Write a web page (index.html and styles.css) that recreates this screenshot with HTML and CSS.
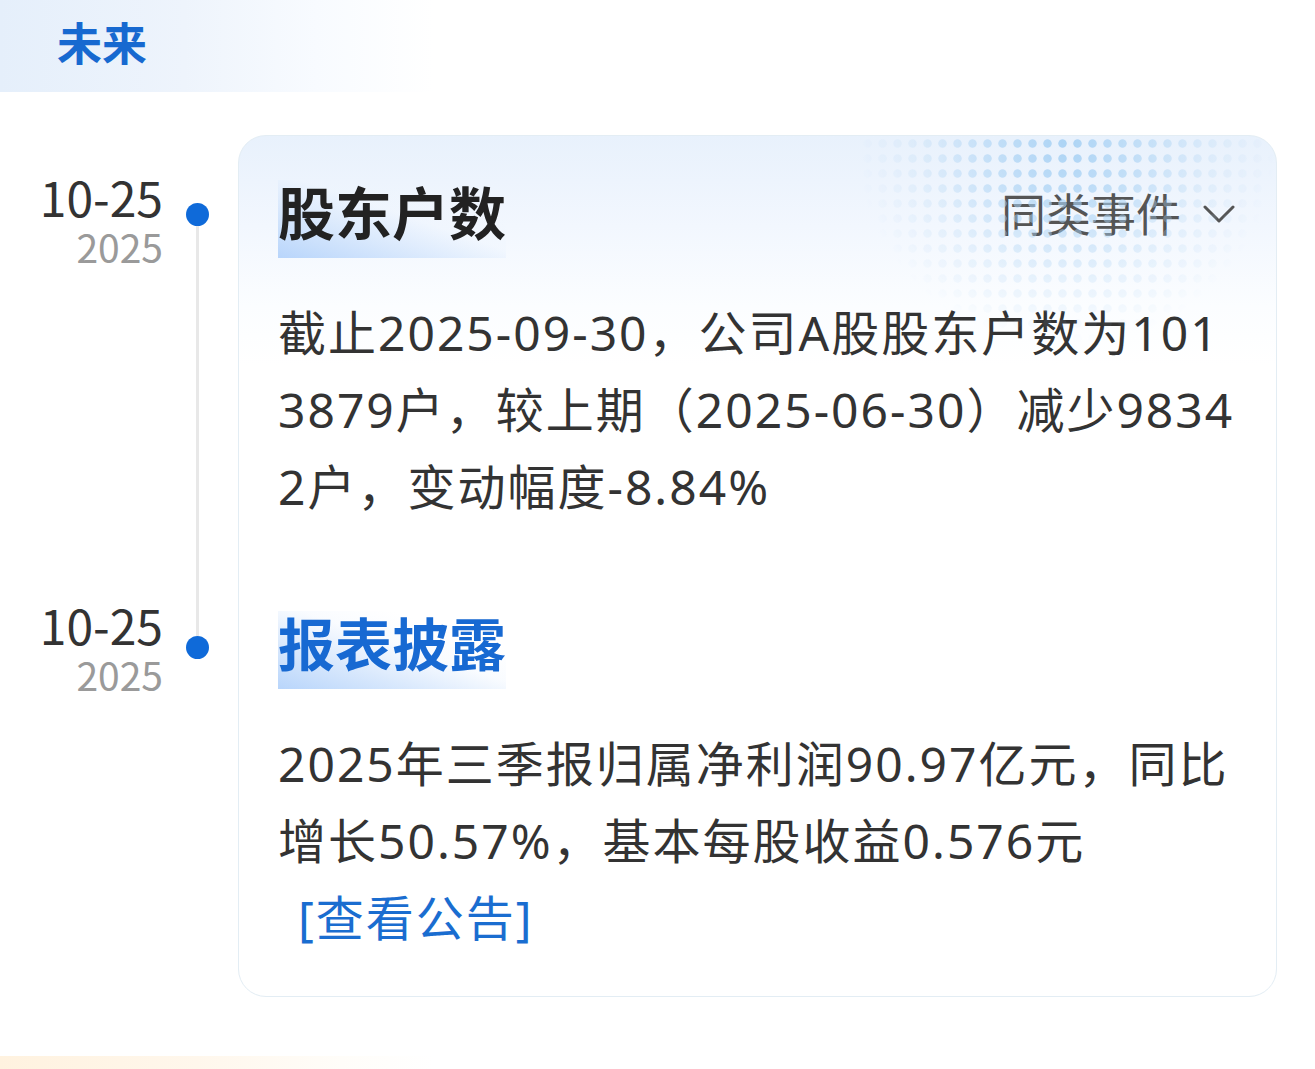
FILE: index.html
```html
<!DOCTYPE html>
<html lang="zh-CN">
<head>
<meta charset="utf-8">
<title>未来</title>
<link rel="stylesheet" href="styles.css">
</head>
<body>
<div class="section-head future"><span class="section-title">未来</span></div>

<div class="timeline">
  <div class="card-bg"><div class="card-dots"></div></div>

  <div class="date date-first"><div class="md">10-25</div><div class="yr">2025</div></div>
  <div class="axis axis-first"><span class="dot"></span><span class="rail"></span></div>
  <div class="event event-first">
    <div class="event-head">
      <h2 class="event-title">股东户数</h2>
      <div class="similar">同类事件<svg class="chev" width="32" height="18" viewBox="0 0 32 18"><path d="M2 2 L16 16 L30 2" fill="none" stroke="#555" stroke-width="3" stroke-linecap="round" stroke-linejoin="round"/></svg></div>
    </div>
    <p class="event-text">截止2025-09-30，公司A股股东户数为1013879户，较上期（2025-06-30）减少98342户，变动幅度-8.84%</p>
  </div>

  <div class="date date-second"><div class="md">10-25</div><div class="yr">2025</div></div>
  <div class="axis axis-second"><span class="rail"></span><span class="dot"></span></div>
  <div class="event event-second">
    <h2 class="event-title blue">报表披露</h2>
    <p class="event-text">2025年三季报归属净利润90.97亿元，同比增长50.57%，基本每股收益0.576元<a class="notice-link" href="#">[查看公告]</a></p>
  </div>
</div>

<div class="section-head past"></div>
</body>
</html>
```
FILE: styles.css
```css
html, body {
  margin: 0;
  padding: 0;
  background: #fff;
}
body {
  font-family: "Noto Sans", "Noto Sans CJK SC", sans-serif;
  color: #333;
  width: 1315px;
}

.section-head {
  height: 92px;
  display: flex;
  align-items: center;
  padding-left: 57px;
  box-sizing: border-box;
}
.future {
  background: linear-gradient(90deg, #e5effb 0%, #eef4fc 14%, #f8fbff 24%, #ffffff 33%);
}
.past {
  margin-top: 59px;
  background: linear-gradient(90deg, #fff2df 0%, #fff7ec 15%, #fffdf9 26%, #ffffff 33%);
}
.section-title {
  font-family: "Noto Sans CJK SC", sans-serif;
  font-size: 45px;
  font-weight: 700;
  color: #1769d0;
  line-height: 60px;
  margin-top: -8px;
}

.timeline {
  margin-top: 43px;
  display: grid;
  grid-template-columns: 163px 75px 1039px;
  grid-template-rows: auto auto;
}

.card-bg {
  grid-column: 3;
  grid-row: 1 / 3;
  border: 1px solid #e3edf4;
  border-radius: 28px;
  background: linear-gradient(180deg, #e8f1fc 0px, #f2f7fe 90px, #fbfdff 170px, #ffffff 230px);
  overflow: hidden;
  display: flex;
  justify-content: flex-end;
  align-items: flex-start;
}
.card-dots {
  width: 420px;
  height: 215px;
  background-image: radial-gradient(circle, #a9d2f4 0 3.8px, rgba(169,210,244,0) 4.6px);
  background-size: 15px 15px;
  background-position: 4px 0px;
  -webkit-mask-image: radial-gradient(ellipse 50% 95% at 50% 3%, rgba(0,0,0,0.95) 0%, rgba(0,0,0,0.6) 35%, rgba(0,0,0,0.22) 68%, rgba(0,0,0,0) 100%);
  mask-image: radial-gradient(ellipse 50% 95% at 50% 3%, rgba(0,0,0,0.95) 0%, rgba(0,0,0,0.6) 35%, rgba(0,0,0,0.22) 68%, rgba(0,0,0,0) 100%);
}

.date {
  grid-column: 1;
  text-align: right;
  font-family: "Noto Sans CJK SC", sans-serif;
}
.date-first { grid-row: 1; padding-top: 33px; }
.date-second { grid-row: 2; padding-top: 71px; }
.md {
  font-size: 48px;
  line-height: 56px;
  color: #333;
}
.yr {
  font-size: 39px;
  line-height: 44px;
  color: #9a9a9a;
}

.axis {
  grid-column: 2;
  display: flex;
  flex-direction: column;
  padding-left: 23px;
}
.axis-first { grid-row: 1; padding-top: 68px; }
.axis-second { grid-row: 2; }
.dot {
  width: 23px;
  height: 23px;
  border-radius: 50%;
  background: #0f6ad9;
  flex: none;
}
.rail {
  width: 3px;
  margin-left: 10px;
  background: #e8e8e8;
}
.axis-first .rail { flex: 1; }
.axis-second .rail { height: 111px; flex: none; }

.event {
  grid-column: 3;
  padding: 0 40px 0 40px;
}
.event-first { grid-row: 1; padding-top: 45px; }
.event-second { grid-row: 2; padding-top: 86px; padding-bottom: 40px; }

.event-head {
  display: flex;
  justify-content: space-between;
  align-items: flex-start;
}
.event-title {
  display: inline-block;
  margin: 0;
  font-family: "Noto Sans CJK SC", sans-serif;
  font-size: 57px;
  line-height: 60px;
  font-weight: 700;
  color: #222;
  padding-bottom: 18px;
  background: linear-gradient(to top right, #b8d5fb 0%, rgba(206,226,252,0.75) 30%, rgba(236,244,254,0.3) 55%, rgba(255,255,255,0) 75%);
}
.event-title.blue {
  color: #1769d2;
}
.similar {
  display: flex;
  align-items: center;
  gap: 22px;
  font-family: "Noto Sans CJK SC", sans-serif;
  font-size: 45px;
  line-height: 64px;
  color: #555;
  margin-top: 1px;
  margin-right: 2px;
}
.chev { display: block; margin-top: 2px; }

.event-text {
  margin: 37px 0 0;
  font-size: 48px;
  line-height: 76.8px;
  letter-spacing: 2px;
  color: #333;
  word-break: break-all;
}
.notice-link {
  display: inline-block;
  margin-left: 20px;
  color: #1a6dd0;
  text-decoration: none;
}
```
